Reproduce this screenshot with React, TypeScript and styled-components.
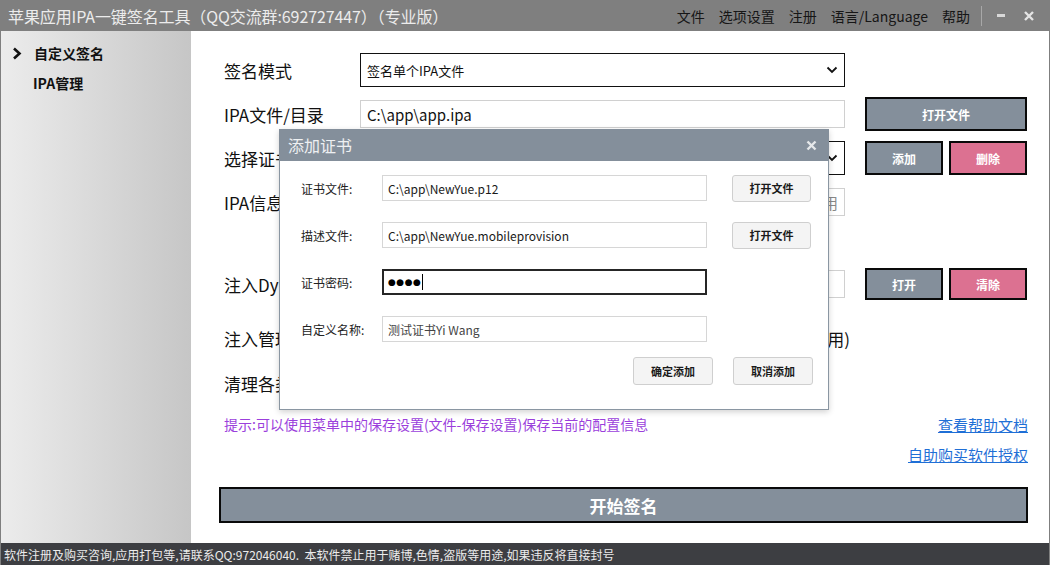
import React from "react";
import styled, { createGlobalStyle } from "styled-components";

const GlobalStyle = createGlobalStyle`
  html, body {
    margin: 0;
    padding: 0;
    background: #ffffff;
    font-family: "Noto Sans CJK SC", "Noto Sans", sans-serif;
  }
  * { box-sizing: border-box; }
`;

const Chevron = () => (
  <svg width="12" height="8" viewBox="0 0 12 8">
    <polyline points="1.5,1.5 6,6 10.5,1.5" fill="none" stroke="#111" strokeWidth="1.8" />
  </svg>
);

const App = () => {
  return (
    <Window>
      <GlobalStyle />
      <TitleBar>
        <Title>苹果应用IPA一键签名工具（QQ交流群:692727447）（专业版）</Title>
        <Menu>
          <MenuItem>文件</MenuItem>
          <MenuItem>选项设置</MenuItem>
          <MenuItem>注册</MenuItem>
          <MenuItem>语言/Language</MenuItem>
          <MenuItem>帮助</MenuItem>
          <Divider />
          <WinButton>
            <svg width="8" height="4" viewBox="0 0 8 4">
              <rect x="0" y="0" width="8" height="3" fill="#d8d8d8" />
            </svg>
          </WinButton>
          <WinButton $close>
            <svg width="12" height="12" viewBox="0 0 12 12">
              <path d="M2 2 L10 10 M10 2 L2 10" stroke="#e4e4e4" strokeWidth="2.4" />
            </svg>
          </WinButton>
        </Menu>
      </TitleBar>

      <Body>
        <Sidebar>
          <NavItem>
            <NavArrow>
              <svg width="10" height="13" viewBox="0 0 10 13">
                <polyline points="2,1.5 7.5,6.5 2,11.5" fill="none" stroke="#111" strokeWidth="2.6" />
              </svg>
            </NavArrow>
            自定义签名
          </NavItem>
          <NavItem $sub>IPA管理</NavItem>
        </Sidebar>

        <Main>
          <Row $mt={22}>
            <Label>签名模式</Label>
            <Select>
              <span>签名单个IPA文件</span>
              <Chevron />
            </Select>
          </Row>
          <Row $mt={10}>
            <Label>IPA文件/目录</Label>
            <Field>C:\app\app.ipa</Field>
            <Actions>
              <ActionButton $wide>打开文件</ActionButton>
            </Actions>
          </Row>
          <Row $mt={10}>
            <Label>选择证书</Label>
            <Select>
              <span />
              <Chevron />
            </Select>
            <Actions>
              <ActionButton>添加</ActionButton>
              <ActionButton $danger>删除</ActionButton>
            </Actions>
          </Row>
          <Row $mt={10}>
            <Label>IPA信息</Label>
            <Field $right $muted>选择IPA文件后将显示应用</Field>
          </Row>
          <Row $mt={48}>
            <Label>注入Dylib</Label>
            <Field />
            <Actions>
              <ActionButton $tall>打开</ActionButton>
              <ActionButton $tall $danger>清除</ActionButton>
            </Actions>
          </Row>
          <Row $mt={20}>
            <Label>注入管理插件</Label>
            <Note>注入后可在设备上管理已签名的应用和证书信息(仅越狱设备可用)</Note>
          </Row>
          <Row $mt={11}>
            <Label>清理各类缓存</Label>
          </Row>

          <HintRow>
            <Hint>提示:可以使用菜单中的保存设置(文件-保存设置)保存当前的配置信息</Hint>
            <Link>查看帮助文档</Link>
          </HintRow>
          <LinkRow>
            <Link>自助购买软件授权</Link>
          </LinkRow>

          <StartButton>开始签名</StartButton>
        </Main>
      </Body>

      <StatusBar>
        软件注册及购买咨询,应用打包等,请联系QQ:972046040.&nbsp;&nbsp;本软件禁止用于赌博,色情,盗版等用途,如果违反将直接封号
      </StatusBar>

      <Dialog>
        <DialogHeader>
          <DialogTitle>添加证书</DialogTitle>
          <svg width="11" height="11" viewBox="0 0 11 11">
            <path d="M1.5 1.5 L9.5 9.5 M9.5 1.5 L1.5 9.5" stroke="#e6e8ea" strokeWidth="2.4" />
          </svg>
        </DialogHeader>
        <DialogBody>
          <DialogRow>
            <DialogLabel>证书文件:</DialogLabel>
            <DialogField>C:\app\NewYue.p12</DialogField>
            <SmallButton>打开文件</SmallButton>
          </DialogRow>
          <DialogRow>
            <DialogLabel>描述文件:</DialogLabel>
            <DialogField>C:\app\NewYue.mobileprovision</DialogField>
            <SmallButton>打开文件</SmallButton>
          </DialogRow>
          <DialogRow>
            <DialogLabel>证书密码:</DialogLabel>
            <DialogField $focused>
              <Dots>●●●●</Dots>
              <Caret />
            </DialogField>
          </DialogRow>
          <DialogRow>
            <DialogLabel>自定义名称:</DialogLabel>
            <DialogField $muted>测试证书Yi Wang</DialogField>
          </DialogRow>
          <DialogButtons>
            <SmallButton $big>确定添加</SmallButton>
            <SmallButton $big>取消添加</SmallButton>
          </DialogButtons>
        </DialogBody>
      </Dialog>
    </Window>
  );
};

export default App;

const Window = styled.div`
  position: relative;
  width: 1050px;
  height: 565px;
  display: flex;
  flex-direction: column;
  border-left: 1px solid #7f7f7f;
  border-right: 1px solid #7f7f7f;
  overflow: hidden;
`;

const TitleBar = styled.div`
  height: 31px;
  flex-shrink: 0;
  background: #7f7f7f;
  display: flex;
  align-items: center;
  justify-content: space-between;
  padding-left: 7px;
  padding-right: 12px;
`;

const Title = styled.div`
  color: #ececec;
  font-size: 16px;
  letter-spacing: -0.1px;
`;

const Menu = styled.div`
  display: flex;
  align-items: center;
`;

const MenuItem = styled.span`
  color: #161616;
  font-size: 14px;
  margin-left: 14px;
`;

const Divider = styled.span`
  width: 1px;
  height: 20px;
  background: #a8a8a8;
  margin-left: 11px;
`;

const WinButton = styled.span<{ $close?: boolean }>`
  width: 16px;
  display: flex;
  align-items: center;
  justify-content: center;
  margin-left: ${(p) => (p.$close ? "12px" : "11px")};
`;

const Body = styled.div`
  flex: 1;
  display: flex;
  min-height: 0;
`;

const Sidebar = styled.div`
  width: 190px;
  flex-shrink: 0;
  background: linear-gradient(to right, #ececec, #c6c6c6);
  padding-top: 11px;
`;

const NavItem = styled.div<{ $sub?: boolean }>`
  display: flex;
  align-items: center;
  height: 22px;
  margin-bottom: 8px;
  padding-left: ${(p) => (p.$sub ? "32px" : "11px")};
  font-size: 14px;
  font-weight: 700;
  color: #111;
`;

const NavArrow = styled.span`
  display: inline-flex;
  width: 22px;
`;

const Main = styled.div`
  flex: 1;
  display: flex;
  flex-direction: column;
  padding-left: 33px;
  padding-right: 21px;
`;

const Row = styled.div<{ $mt: number }>`
  display: flex;
  align-items: center;
  height: 34px;
  margin-top: ${(p) => p.$mt}px;
`;

const Label = styled.div`
  width: 136px;
  flex-shrink: 0;
  font-size: 17px;
  color: #111;
  white-space: nowrap;
`;

const Note = styled.div`
  width: 490px;
  font-size: 17px;
  color: #111;
  white-space: nowrap;
  display: flex;
  justify-content: flex-end;
`;

const Select = styled.div`
  width: 485px;
  height: 34px;
  border: 1px solid #111;
  display: flex;
  align-items: center;
  justify-content: space-between;
  padding: 0 6px 0 6px;
  font-size: 13px;
  color: #111;
`;

const Field = styled.div<{ $right?: boolean; $muted?: boolean }>`
  width: 485px;
  height: 28px;
  border: 1px solid #d0d0d0;
  display: flex;
  align-items: center;
  justify-content: ${(p) => (p.$right ? "flex-end" : "flex-start")};
  padding: 0 6px;
  font-size: 15px;
  color: ${(p) => (p.$muted ? "#888" : "#111")};
`;

const Actions = styled.div`
  margin-left: 20px;
  width: 162px;
  display: flex;
  justify-content: space-between;
`;

const ActionButton = styled.div<{ $wide?: boolean; $danger?: boolean; $tall?: boolean }>`
  width: ${(p) => (p.$wide ? "162px" : "78px")};
  height: ${(p) => (p.$tall ? "32px" : "34px")};
  background: ${(p) => (p.$danger ? "#dc7191" : "#848f9b")};
  border: 2px solid #0a0a0a;
  color: #ffffff;
  font-size: 12px;
  font-weight: 700;
  display: flex;
  align-items: center;
  justify-content: center;
`;

const HintRow = styled.div`
  display: flex;
  justify-content: space-between;
  align-items: center;
  margin-top: 14px;
  height: 20px;
`;

const Hint = styled.span`
  color: #9b3fdc;
  font-size: 14px;
`;

const Link = styled.span`
  color: #1f6fd6;
  font-size: 15px;
  text-decoration: underline;
`;

const LinkRow = styled.div`
  display: flex;
  justify-content: flex-end;
  align-items: center;
  margin-top: 10px;
  height: 20px;
`;

const StartButton = styled.div`
  margin-top: 23px;
  margin-left: -5px;
  height: 36px;
  background: #848f9b;
  border: 2px solid #0a0a0a;
  color: #ffffff;
  font-size: 17px;
  font-weight: 700;
  display: flex;
  align-items: center;
  justify-content: center;
`;

const StatusBar = styled.div`
  height: 22px;
  flex-shrink: 0;
  background: #3d3e42;
  color: #ececec;
  font-size: 12px;
  display: flex;
  align-items: center;
  padding-left: 4px;
  margin: 0 -1px;
`;

const Dialog = styled.div`
  position: absolute;
  left: 278px;
  top: 129px;
  width: 550px;
  height: 281px;
  background: #ffffff;
  border: 1px solid #8a96a2;
  box-shadow: 0 2px 6px rgba(0, 0, 0, 0.18);
  display: flex;
  flex-direction: column;
`;

const DialogHeader = styled.div`
  height: 32px;
  background: #848f9b;
  display: flex;
  align-items: center;
  justify-content: space-between;
  padding-left: 9px;
  padding-right: 12px;
  margin: -1px -1px 0 -1px;
`;

const DialogTitle = styled.span`
  color: #eef0f2;
  font-size: 16px;
`;

const DialogBody = styled.div`
  flex: 1;
  display: flex;
  flex-direction: column;
  gap: 21px;
  padding-top: 14px;
  padding-left: 21px;
`;

const DialogRow = styled.div`
  display: flex;
  align-items: center;
  height: 26px;
`;

const DialogLabel = styled.span`
  width: 81px;
  flex-shrink: 0;
  font-size: 12px;
  color: #222;
`;

const DialogField = styled.div<{ $focused?: boolean; $muted?: boolean }>`
  width: 325px;
  height: 26px;
  border: ${(p) => (p.$focused ? "2px solid #262626" : "1px solid #d6d6d6")};
  display: flex;
  align-items: center;
  padding: 0 ${(p) => (p.$focused ? "4px" : "5px")};
  font-size: 12px;
  color: ${(p) => (p.$muted ? "#444" : "#1a1a1a")};
  margin-right: 25px;
`;

const Dots = styled.span`
  font-family: "DejaVu Sans", sans-serif;
  font-size: 9px;
  letter-spacing: 0.5px;
  color: #000;
`;

const Caret = styled.span`
  width: 1px;
  height: 16px;
  background: #000;
  margin-left: 1px;
`;

const SmallButton = styled.div<{ $big?: boolean }>`
  width: ${(p) => (p.$big ? "80px" : "79px")};
  height: ${(p) => (p.$big ? "28px" : "27px")};
  background: #f4f4f4;
  border: 1px solid #cfcfcf;
  border-radius: 3px;
  font-size: 11px;
  font-weight: 700;
  color: #1a1a1a;
  display: flex;
  align-items: center;
  justify-content: center;
`;

const DialogButtons = styled.div`
  display: flex;
  justify-content: flex-end;
  gap: 20px;
  padding-right: 15px;
  margin-top: -6px;
`;
